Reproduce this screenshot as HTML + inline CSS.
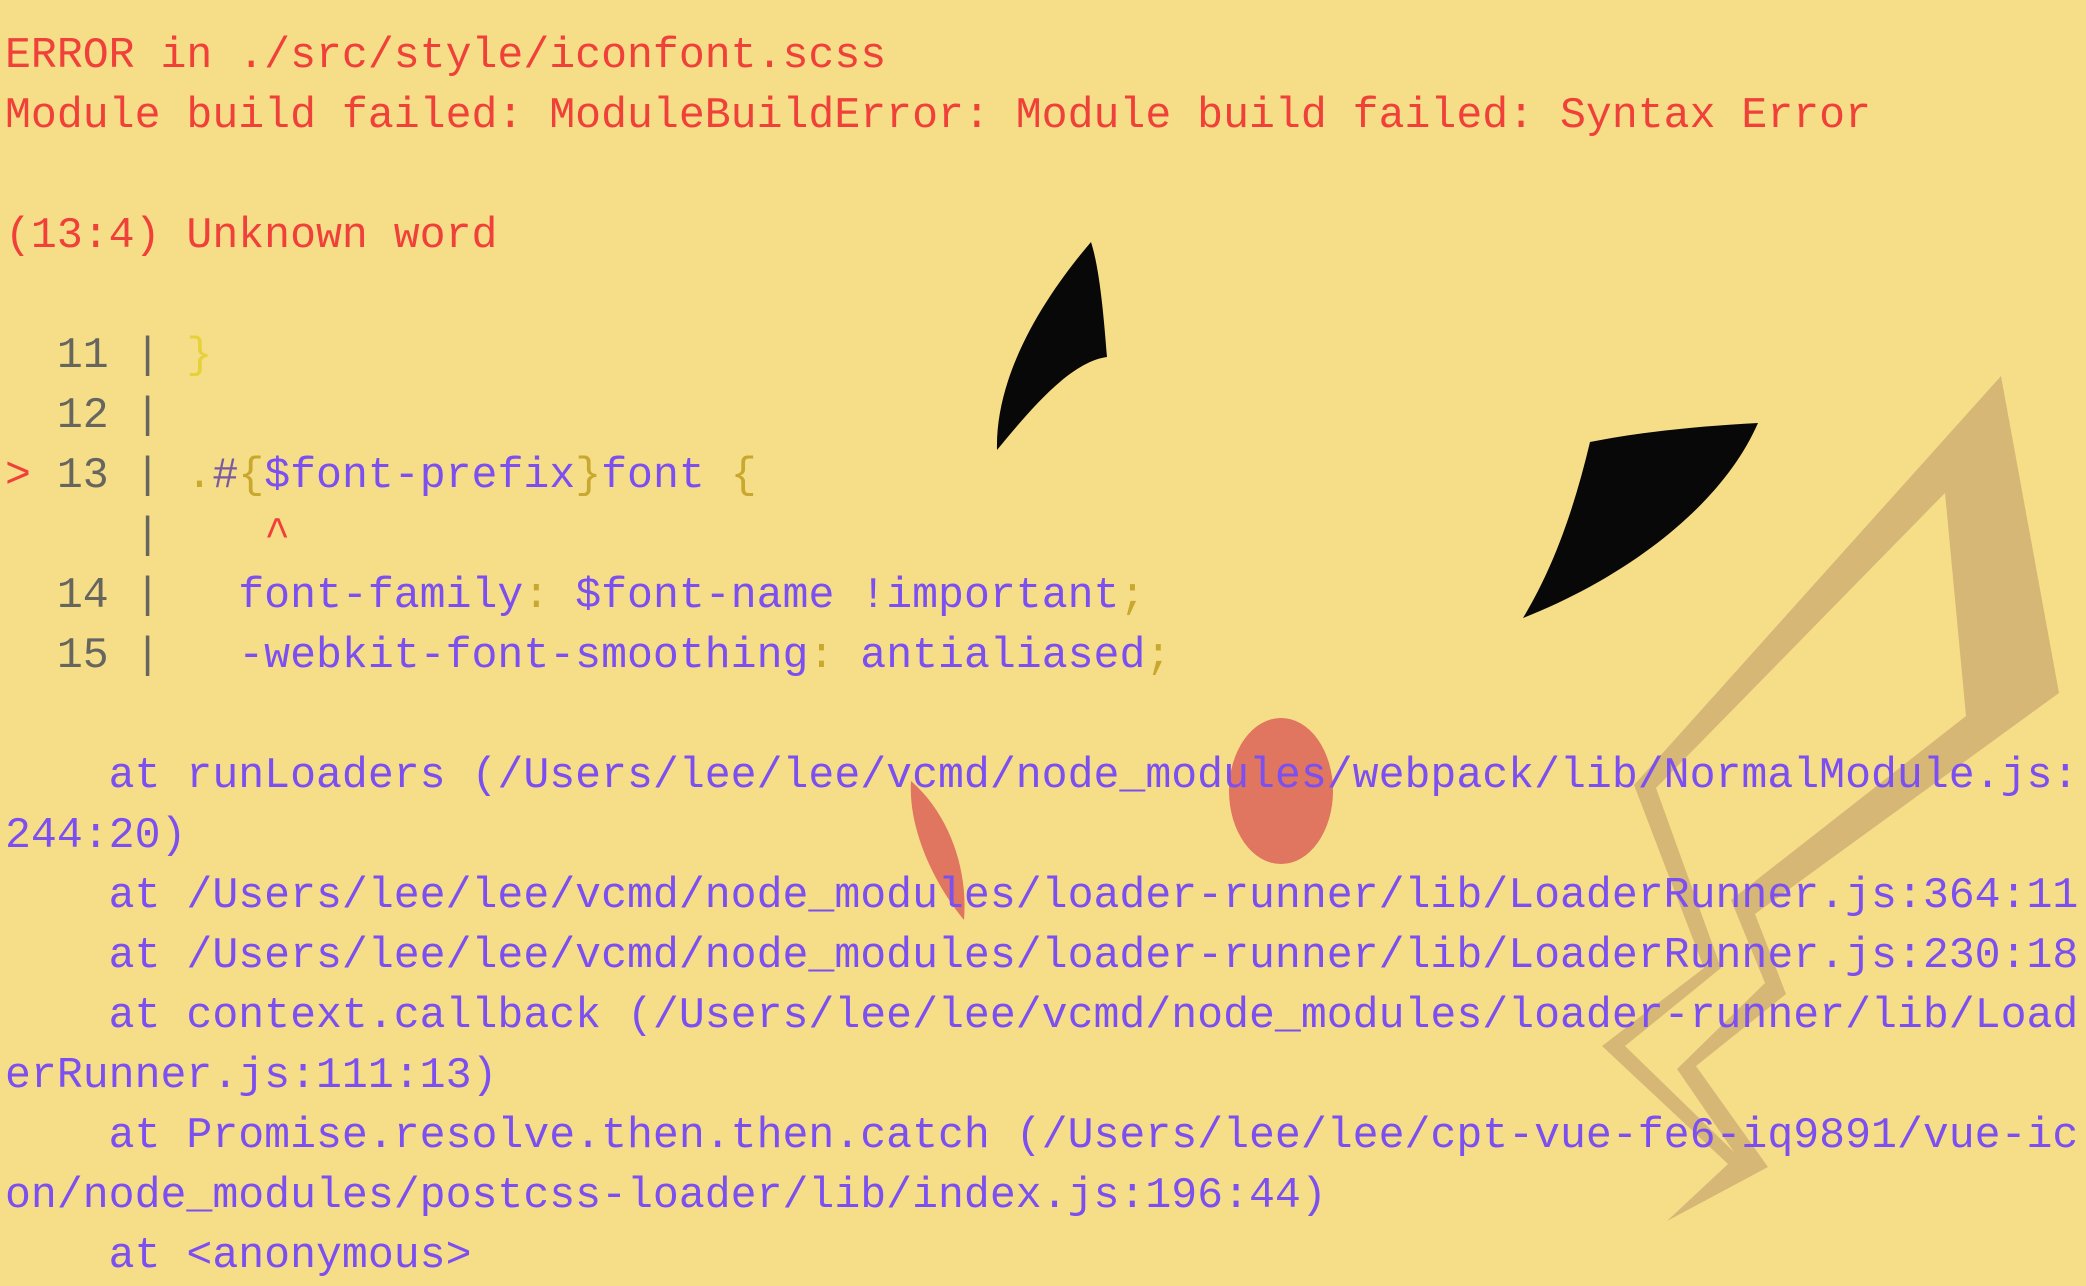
<!DOCTYPE html>
<html><head><meta charset="utf-8"><style>
html,body{margin:0;padding:0;}
body{width:2086px;height:1278px;background:#f6de89;overflow:hidden;position:relative;}
svg{position:absolute;left:0;top:0;}
pre{position:absolute;left:5px;top:26px;margin:0;font-family:"Liberation Mono",monospace;font-size:43.2px;line-height:60px;color:#7b4ff0;white-space:pre;}
.r{color:#f0403a}.g{color:#66665f}.y{color:#e6d13a}.o{color:#c9a830}.m{color:#7a5aa0}
</style></head><body>
<svg width="2086" height="1278" viewBox="0 0 2086 1278">
<path fill="#d6b776" fill-rule="evenodd" d="M2001,376 L2059,693 L1755,914 L1786,994 L1696,1066 L1768,1167 L1667,1221 L1728,1164 L1602,1046 L1704,968 L1634,785 Z M1945,493 L1966,716 L1731,900 L1765,983 L1677,1069 L1734,1152 L1625,1046 L1721,968 L1656,788 Z"/>
<path fill="#080808" d="M1091,242 C1100,270 1104,320 1107,357 C1070,362 1030,410 997,450 C995,370 1050,290 1091,242 Z"/>
<path fill="#080808" d="M1590,442 C1640,432 1700,426 1758,423 C1720,510 1620,580 1523,618 C1555,565 1575,505 1590,442 Z"/>
<ellipse cx="1281" cy="791" rx="52" ry="73" fill="#e07560"/>
<path fill="#e07560" d="M911,781 C950,815 968,870 964,920 C935,885 908,830 911,781 Z"/>
</svg>
<pre><span class="r">ERROR in ./src/style/iconfont.scss
Module build failed: ModuleBuildError: Module build failed: Syntax Error

(13:4) Unknown word</span>

<span class="g">  11 | </span><span class="y">}</span>
<span class="g">  12 |</span>
<span class="r">&gt;</span><span class="g"> 13 | </span><span class="o">.</span><span class="m">#</span><span class="o">{</span>$font-prefix<span class="o">}</span>font <span class="o">{</span>
<span class="g">     |</span>    <span class="r">^</span>
<span class="g">  14 |</span>   font-family<span class="o">:</span> $font-name !important<span class="o">;</span>
<span class="g">  15 |</span>   -webkit-font-smoothing<span class="o">:</span> antialiased<span class="o">;</span>

    at runLoaders (/Users/lee/lee/vcmd/node_modules/webpack/lib/NormalModule.js:
244:20)
    at /Users/lee/lee/vcmd/node_modules/loader-runner/lib/LoaderRunner.js:364:11
    at /Users/lee/lee/vcmd/node_modules/loader-runner/lib/LoaderRunner.js:230:18
    at context.callback (/Users/lee/lee/vcmd/node_modules/loader-runner/lib/Load
erRunner.js:111:13)
    at Promise.resolve.then.then.catch (/Users/lee/lee/cpt-vue-fe6-iq9891/vue-ic
on/node_modules/postcss-loader/lib/index.js:196:44)
    at &lt;anonymous&gt;</pre>
</body></html>
